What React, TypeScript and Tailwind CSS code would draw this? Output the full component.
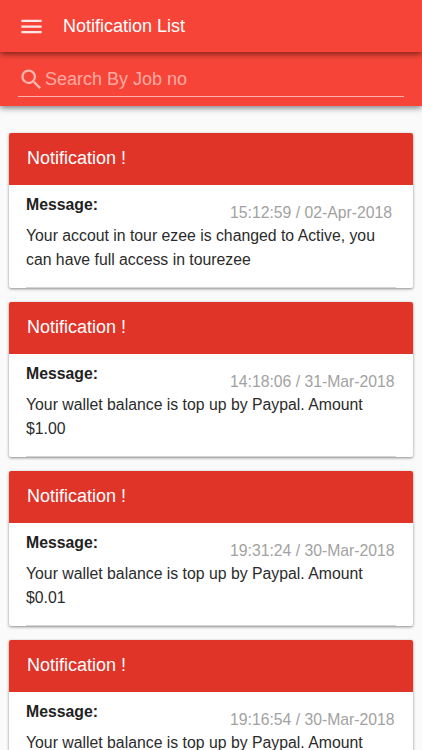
const items = [
  { time: '15:12:59 / 02-Apr-2018', lines: ['Your accout in tour ezee is changed to Active, you', 'can have full access in tourezee'] },
  { time: '14:18:06 / 31-Mar-2018', lines: ['Your wallet balance is top up by Paypal. Amount', '$1.00'] },
  { time: '19:31:24 / 30-Mar-2018', lines: ['Your wallet balance is top up by Paypal. Amount', '$0.01'] },
  { time: '19:16:54 / 30-Mar-2018', lines: ['Your wallet balance is top up by Paypal. Amount'] },
];

type Item = (typeof items)[number];

function Card({ item }: { item: Item }) {
  return (
    <article className="h-[155px] shrink-0 overflow-hidden rounded-[2px] bg-white shadow-[0_1px_3px_rgba(0,0,0,0.45)]">
      <h2 className="flex h-[52px] items-center bg-[#e13429] pb-px pl-[18px] text-[18px] text-white">Notification !</h2>
      <div className="flex h-[39px] pl-[17px] text-[15.8px] leading-[20px]">
        <b className="w-[204px] pt-[10px] text-[#222]">Message:</b>
        <time className="pt-[18px] text-[15.75px] whitespace-nowrap text-[#a2a2a2]">{item.time}</time>
      </div>
      <div className="mx-[17px] h-[64px] border-b border-[#d4d4d4] text-[15.8px] leading-[24px] whitespace-nowrap text-[#2b2b2b]">
        {item.lines.map((line) => <p key={line}>{line}</p>)}
      </div>
    </article>
  );
}

export default function App() {
  return (
    <main className="h-[750px] w-[422px] overflow-hidden bg-[#fafafa] font-['Liberation_Sans',Arial,sans-serif]">
      <header className="relative flex h-[52px] items-center bg-[#f64538] pl-[18px] text-white shadow-[0_2px_6px_rgba(0,0,0,0.5)]">
        <svg width="27" height="27" viewBox="0 0 24 24" fill="#ffe9e7"><path d="M3 18h18v-2H3v2zm0-5h18v-2H3v2zm0-7v2h18V6H3z" /></svg>
        <h1 className="ml-[18px] text-[18px]">Notification List</h1>
      </header>
      <section className="h-[54px] bg-[#f64538] px-[18px] pt-[12px] shadow-[0_2px_6px_rgba(0,0,0,0.5)]">
        <label className="flex h-[33px] items-center border-b border-[#fbb4af] pb-[2px] text-[#ffaaa3]">
          <svg className="shrink-0" width="27" height="27" viewBox="0 0 24 24" fill="#ffb8b2"><path d="M15.5 14h-.79l-.28-.27A6.47 6.47 0 0 0 16 9.5 6.5 6.5 0 1 0 9.5 16c1.61 0 3.09-.59 4.23-1.57l.27.28v.79l5 4.99L20.49 19l-4.99-5zm-6 0C7.01 14 5 11.99 5 9.5S7.01 5 9.5 5 14 7.01 14 9.5 11.99 14 9.5 14z" /></svg>
          <input className="min-w-0 flex-1 bg-transparent text-[18px] outline-none placeholder:text-[#ffaaa3]" placeholder="Search By Job no" />
        </label>
      </section>
      <div className="flex flex-col gap-[14px] px-[9px] pt-[27px]">
        {items.map((item) => <Card key={item.time} item={item} />)}
      </div>
    </main>
  );
}
